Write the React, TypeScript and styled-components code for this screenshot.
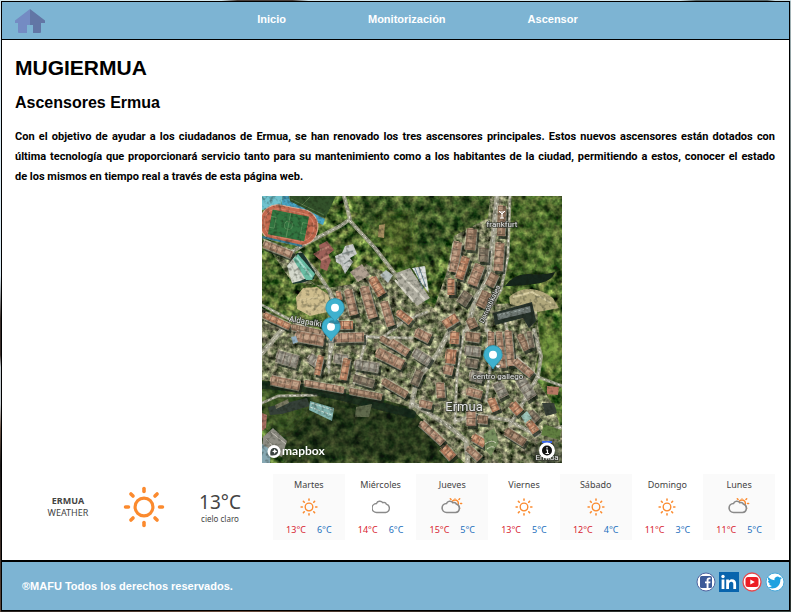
import React from 'react';
import styled, { createGlobalStyle } from 'styled-components';

const GlobalStyle = createGlobalStyle`
  * { box-sizing: border-box; }
  body {
    margin: 0;
    padding: 1px;
    font-family: 'Liberation Sans', Arial, sans-serif;
    font-size: 11px;
    color: #000;
    background:
      linear-gradient(to right, #d5e8ee 0 28%, #4b3f3a 30% 37%, #d3e6ed 39% 86%, #59676a 88% 97%, #c9dde4 98%) top / 100% 1px no-repeat,
      linear-gradient(#d9e9f2 0 45%, #3b302c 52% 58%, #c5ccd0 60% 66%, #6d5648 70%, #1a1818 76%, #5d4639) left / 1px 100% no-repeat,
      linear-gradient(to right, #2a2522, #6b4c3b 30%, #26231f 60%, #3d4a48) bottom / 100% 1px no-repeat,
      linear-gradient(#a9bbbf, #46504d 40%, #2c3532);
  }
`;

const Page = styled.div`
  display: flex;
  flex-direction: column;
  min-height: calc(100vh - 2px);
  border: 1px solid #000;
  background: #fff;
`;

const Header = styled.header`
  display: flex;
  align-items: center;
  height: 38px;
  padding-left: 12px;
  border-bottom: 1px solid #000;
  background: #7db4d3;
`;

const HomeLink = styled.a`
  display: block;
  height: 26px;
  svg { display: block; }
`;

const Nav = styled.nav`
  flex: 1;
  display: flex;
  justify-content: center;
  gap: 82px;
`;

const NavLink = styled.a`
  color: #fff;
  font-weight: bold;
  line-height: 14px;
  text-decoration: none;
  padding-bottom: 3px;
`;

const Main = styled.main`
  flex: 1;
  display: flex;
  flex-direction: column;
  padding: 16px 14px 20px 13px;
`;

const Title = styled.h1`
  margin: 0;
  font-size: 21px;
  line-height: 24px;
`;

const Subtitle = styled.h2`
  margin: 13px 0 14px;
  font-size: 16px;
  line-height: 20px;
`;

const Intro = styled.p`
  margin: 0 0 9px;
  font-family: Roboto, 'Liberation Sans', sans-serif;
  font-weight: bold;
  line-height: 20px;
  text-align: justify;
`;

const MapFrame = styled.figure`
  align-self: center;
  width: 300px;
  margin: 0 0 11px 33px;
  svg { display: block; width: 100%; }
`;

const Weather = styled.section`
  display: grid;
  grid-template-columns: 258px 1fr;
  font-family: 'Noto Sans', sans-serif;
  color: #444;
`;

const Current = styled.div`
  display: grid;
  grid-template-columns: repeat(3, 1fr);
  align-items: center;
  justify-items: center;
  padding: 0 15px;
  text-align: center;
`;

const Place = styled.div`
  font-size: 9px;
  line-height: 12px;
  strong { display: block; }
`;

const Temperature = styled.div`
  font-size: 19px;
  line-height: 22px;
`;

const Sky = styled.div`
  font-size: 8px;
  line-height: 11px;
`;

const Forecast = styled.ul`
  display: grid;
  grid-template-columns: repeat(7, 1fr);
  margin: 0;
  padding: 0;
  list-style: none;
`;

const Day = styled.li<{ $shaded: boolean }>`
  display: flex;
  flex-direction: column;
  align-items: center;
  height: 66px;
  padding-top: 4px;
  font-size: 9px;
  line-height: 14px;
  background: ${p => (p.$shaded ? '#fafafa' : '#fff')};
  svg { margin: 6px 0 7px; }
`;

const Range = styled.div`
  display: flex;
  gap: 11px;
`;

const Degree = styled.span<{ $kind: 'max' | 'min' }>`
  color: ${p => (p.$kind === 'max' ? '#d8232f' : '#1c6fbd')};
`;

const Footer = styled.footer`
  display: flex;
  justify-content: space-between;
  height: 50px;
  padding: 0 4px 0 20px;
  border-top: 2px solid #000;
  background: #7db4d3;
`;

const Copyright = styled.p`
  margin: 17px 0 0;
  color: #fff;
  font-weight: bold;
  line-height: 14px;
`;

const Social = styled.div`
  display: flex;
  gap: 3px;
  padding-top: 10px;
  a { display: block; height: 20px; }
  svg { display: block; }
`;

/* ---------- icons ---------- */

const HomeIcon = () => (
  <svg width="32" height="26" viewBox="0 0 32 26">
    <path d="M16 1 31 12.5V15h-4v9q0 1-1 1h-7v-8h-3z" fill="#6276a5" />
    <path d="M16 1 1 12.5V15h3v9q0 1 1 1h8v-8h3z" fill="#748bc3" />
  </svg>
);

const Rays = ({ cx, cy, from, to, width }: { cx: number; cy: number; from: number; to: number; width: number }) => (
  <g stroke="#fb8a2e" strokeWidth={width} strokeLinecap="round">
    {[0, 45, 90, 135, 180, 225, 270, 315].map(a => (
      <line key={a} x1={cx + from} y1={cy} x2={cx + to} y2={cy} transform={`rotate(${a} ${cx} ${cy})`} />
    ))}
  </g>
);

const SunIcon = ({ size }: { size: number }) => (
  <svg width={size} height={size} viewBox="0 0 40 40">
    <circle cx="20" cy="20" r="8.5" fill="none" stroke="#fb8a2e" strokeWidth="3" />
    <Rays cx={20} cy={20} from={14.8} to={17.6} width={3.4} />
  </svg>
);

const cloudPath = 'M4.7 15.5a4.5 4.5 0 0 1-.2-9C5.4 4 8.9 3.3 10.9 5.7c1.5-.6 3 .1 3.4 1.4a4.3 4.3 0 0 1-.8 8.4z';

const CloudIcon = () => (
  <svg width="18" height="18" viewBox="0 0 18 18">
    <path d={cloudPath} fill="none" stroke="#8a8a8a" strokeWidth="1.4" transform="translate(0 -1)" />
  </svg>
);

const PartlyIcon = () => (
  <svg width="22" height="18" viewBox="0 0 22 18">
    <g transform="translate(1 -1)">
      <circle cx="13" cy="6.5" r="3.4" fill="none" stroke="#fb8a2e" strokeWidth="1.5" />
      <Rays cx={13} cy={6.5} from={5.6} to={6.6} width={1.5} />
      <path d={cloudPath} fill="#fafafa" stroke="#8a8a8a" strokeWidth="1.6" />
    </g>
  </svg>
);

const FacebookIcon = () => (
  <svg width="20" height="20" viewBox="0 0 20 20">
    <circle cx="10" cy="10" r="9" fill="#fff" stroke="#5065a0" strokeWidth="1" />
    <rect x="4" y="4" width="12" height="12" rx="1.5" fill="#3c5a99" />
    <path d="M10.6 16v-4.7H9V9.4h1.6V8c0-1.7 1-2.6 2.5-2.6h1.4v1.8h-1c-.8 0-1 .4-1 1v1.2h2l-.3 1.9h-1.7V16z" fill="#fff" />
  </svg>
);

const LinkedInIcon = () => (
  <svg width="20" height="20" viewBox="0 0 20 20">
    <rect width="20" height="20" fill="#0864ad" />
    <circle cx="4" cy="4.5" r="1.7" fill="#fff" />
    <path d="M2.6 7.5h2.8V17H2.6zM7.2 7.5h2.7v1.3c.6-1 1.6-1.6 3-1.6 2.8 0 4.2 1.6 4.2 4.5V17h-2.8v-4.9c0-1.4-.7-2.3-2-2.3-1.4 0-2.3 1-2.3 2.5V17H7.2z" fill="#fff" />
  </svg>
);

const YouTubeIcon = () => (
  <svg width="20" height="20" viewBox="0 0 20 20">
    <circle cx="10" cy="10" r="9" fill="#fff" stroke="#e6494e" strokeWidth="1.3" />
    <rect x="3.5" y="5" width="13" height="10" rx="2.5" fill="#ec1c24" />
    <path d="M8.3 7.6 12.8 10 8.3 12.4z" fill="#fff" />
  </svg>
);

const TwitterIcon = () => (
  <svg width="20" height="20" viewBox="0 0 20 20">
    <circle cx="10" cy="10" r="9" fill="#fff" stroke="#49a9da" strokeWidth="1" />
    <path d="M17 5.8c-.6.2-1.1.4-1.7.4.6-.3 1-.9 1.2-1.5-.6.3-1.2.6-1.9.7a3.1 3.1 0 0 0-5.2 2.8C6.9 8 4.8 6.9 3.4 5.1c-.9 1.5-.3 3.1.9 4-.5 0-.9-.1-1.3-.4 0 1.5 1 2.7 2.4 3-.4.1-.9.1-1.3 0 .4 1.3 1.5 2.1 2.9 2.2-1.3 1-2.9 1.4-4.5 1.2 5.5 3.2 13 .4 12.9-7.7.6-.4 1.2-1 1.6-1.6z" fill="#1da1e0" />
  </svg>
);

/* ---------- map ---------- */

// x1, y1, x2, y2, roof width, roof colour index
type Row = [number, number, number, number, number, number];

const ROOFS: [string, string][] = [
  ['#a47f68', '#c6a58b'],
  ['#8d705a', '#b4957b'],
  ['#8b877b', '#aeaa9c'],
  ['#b27a5c', '#d8a583'],
  ['#716859', '#988a75'],
];

const ROWS: Row[] = [
  [2, 48, 30, 59, 7, 0], [2, 119, 28, 131, 6, 3], [30, 131, 62, 138, 6, 1],
  [86, 94, 92, 119, 8, 0], [102, 91, 111, 122, 9, 0], [110, 82, 120, 99, 9, 3],
  [122, 106, 129, 130, 8, 0], [76, 96, 78, 104, 5, 3], [136, 116, 149, 126, 7, 3],
  [74, 129, 91, 129, 8, 3], [34, 140, 62, 145, 10, 0], [72, 142, 102, 141, 9, 0],
  [15, 160, 36, 166, 12, 2], [47, 161, 60, 170, 9, 2], [59, 160, 55, 179, 6, 3],
  [72, 162, 86, 164, 9, 2], [85, 163, 81, 184, 7, 3], [93, 168, 117, 172, 9, 2], [92, 182, 112, 188, 8, 4],
  [115, 156, 141, 169, 10, 0], [119, 142, 134, 151, 6, 1], [129, 146, 146, 157, 8, 0],
  [121, 185, 145, 199, 7, 1], [9, 184, 38, 190, 9, 0], [43, 187, 82, 194, 6, 0], [88, 195, 120, 201, 6, 1],
  [196, 46, 191, 76, 8, 0], [189, 83, 189, 99, 7, 3], [210, 33, 208, 54, 10, 1], [204, 61, 197, 83, 8, 3],
  [222, 52, 221, 66, 9, 4], [218, 69, 210, 89, 10, 0], [206, 97, 199, 108, 10, 4],
  [240, 10, 239, 40, 8, 1], [238, 47, 236, 75, 9, 0], [233, 78, 227, 90, 9, 1], [225, 96, 218, 111, 10, 1],
  [182, 129, 195, 121, 9, 3], [208, 123, 212, 132, 9, 1],
  [154, 136, 168, 143, 9, 0], [152, 156, 168, 166, 9, 2], [158, 175, 152, 189, 8, 4],
  [184, 160, 194, 161, 14, 3], [182, 173, 191, 175, 9, 0], [178, 187, 179, 202, 8, 0],
  [193, 136, 192, 148, 9, 3], [204, 140, 218, 142, 9, 1], [203, 154, 219, 156, 9, 2],
  [204, 166, 216, 168, 8, 4], [208, 179, 221, 182, 10, 2], [205, 195, 220, 199, 8, 0],
  [229, 136, 229, 153, 6, 0], [237, 136, 241, 172, 6, 0], [246, 135, 249, 170, 7, 0],
  [258, 139, 265, 154, 7, 1], [267, 136, 270, 152, 5, 4], [253, 165, 270, 179, 7, 0],
  [258, 183, 270, 202, 10, 2], [235, 187, 242, 201, 9, 2], [229, 203, 234, 215, 8, 3],
  [250, 208, 258, 217, 9, 3], [267, 226, 274, 236, 8, 3], [244, 235, 263, 247, 8, 1],
  [209, 215, 209, 230, 9, 0], [216, 223, 226, 224, 8, 1], [211, 241, 223, 248, 8, 3],
  [206, 252, 218, 263, 7, 0], [181, 251, 191, 262, 9, 3], [159, 227, 181, 247, 7, 0],
  [158, 207, 170, 210, 7, 0], [268, 216, 276, 224, 7, 4],
];

const ROADS: [string, number][] = [
  ['M0 109C25 122 40 131 68 140L150 142', 3],
  ['M31 55 45 47 80 29 88 23 82 0', 4],
  ['M88 25 113 52 133 78 150 98', 4],
  ['M38 57 57 79 68 96 76 118 66 170', 4],
  ['M0 157 25 128', 5],
  ['M68 137 67 176', 3],
  ['M105 140 92 187', 3],
  ['M94 139 120 142 142 125 165 116', 3],
  ['M235 0 231 42 226 82 214 101 205 134', 5],
  ['M248 0 246 60 239 94 224 118 224 135', 3],
  ['M188 134 176 157 155 184 149 211', 5],
  ['M150 207 187 230 204 245 206 267', 5],
  ['M202 134 195 178 193 227', 3],
  ['M226 134 228 174 224 205', 3],
  ['M193 225 214 219 246 224 274 239 300 231', 4],
  ['M272 134 279 160 276 180 257 214 248 229', 4],
  ['M243 126 252 159 276 181 300 190', 3],
  ['M0 207 16 200 54 199', 3],
];

const Pin = ({ x, y }: { x: number; y: number }) => (
  <g transform={`translate(${x} ${y})`}>
    <ellipse cx="0" cy="14" rx="6" ry="2" fill="#0a2333" opacity="0.3" />
    <path d="M0 14C-2.5 9-9.2 5.5-9.2-.3a9.2 9.2 0 0 1 18.4 0C9.2 5.5 2.5 9 0 14z" fill="#3fb1ce" />
    <path d="M0 14C-2.5 9-9.2 5.5-9.2-.3a9.2 9.2 0 0 1 18.4 0C9.2 5.5 2.5 9 0 14z" fill="none" stroke="#2b94af" strokeWidth="0.8" />
    <circle cx="0" cy="-.3" r="4" fill="#fff" />
  </g>
);

const SatelliteMap = () => (
  <svg viewBox="0 0 300 267" role="img" aria-label="Mapa de los ascensores de Ermua">
    <defs>
      <filter id="forest" x="0" y="0" width="100%" height="100%" colorInterpolationFilters="sRGB">
        <feTurbulence type="fractalNoise" baseFrequency="0.12" numOctaves="3" seed="7" />
        <feColorMatrix values="1.2 0.3 0 0 -0.44  1.1 0.5 0 0 -0.38  0.7 0.2 0 0 -0.27  0 0 0 0 1" />
      </filter>
      <filter id="ground" x="0" y="0" width="100%" height="100%" colorInterpolationFilters="sRGB">
        <feTurbulence type="fractalNoise" baseFrequency="0.17" numOctaves="3" seed="3" result="n" />
        <feColorMatrix in="n" values="1.2 0.4 0 0 -0.32  1.1 0.5 0 0 -0.3  1 0.3 0 0 -0.28  0 0 0 0 1" />
        <feComposite in2="SourceGraphic" operator="in" />
      </filter>
      <filter id="grain" x="0" y="0" width="100%" height="100%" colorInterpolationFilters="sRGB">
        <feTurbulence type="fractalNoise" baseFrequency="0.25" numOctaves="2" seed="12" />
        <feColorMatrix values="0 0 0 0 0.07  0 0 0 0 0.09  0 0 0 0 0.05  2.8 0 0 0 -1.3" />
      </filter>
      <filter id="soft"><feGaussianBlur stdDeviation="0.5" /></filter>
      <filter id="shade"><feGaussianBlur stdDeviation="4" /></filter>
      <clipPath id="mapEdge"><rect width="300" height="267" /></clipPath>
    </defs>
    <g clipPath="url(#mapEdge)">
      <rect width="300" height="267" filter="url(#forest)" />
      <g filter="url(#shade)">
        <path d="M0 188 145 204 176 235 202 267H22L0 215z" fill="#0c1c12" opacity="0.6" />
        <path d="M0 196 30 195 45 215 22 238 0 222z" fill="#607a33" opacity="0.4" />
        <path d="M90 0H232L222 30 190 38 170 72 135 60 102 25z" fill="#213816" opacity="0.3" />
        <path d="M250 0H300V80H250z" fill="#4c7430" opacity="0.3" />
        <path d="M276 134H300V170L278 168z" fill="#7ea042" opacity="0.7" />
        <path d="M115 20H150V70H128z" fill="#67762c" opacity="0.3" />
      </g>
      <path
        d="M0 42 32 54 45 82 60 93 90 88 104 68 132 80 152 99 172 112 184 78 192 40 226 22 228 0H248L245 70 234 108 274 106 278 148 272 180 292 210 300 236V267H202L176 240 148 211 115 202 0 184V112L32 130 66 135V90L30 86z"
        filter="url(#ground)"
      />
      <g filter="url(#soft)">
        <g fill="none" strokeLinecap="round" strokeLinejoin="round">
          {ROADS.map(([d, w]) => <path key={d} d={d} stroke="#b1af9e" strokeWidth={w} opacity="0.85" />)}
          {ROADS.map(([d]) => <path key={d} d={d} stroke="#e5e4d9" strokeWidth="1" strokeDasharray="2 5 1 3" />)}
          <path d="M0 177 40 180 85 190 150 206" stroke="#14221b" strokeWidth="8" transform="translate(0 12)" opacity="0.7" />
        </g>
        {ROWS.map(([x1, y1, x2, y2, w, c]) => {
          const line = { x1, y1, x2, y2 };
          return (
            <g key={`${x1}-${y1}`}>
              <line {...line} stroke="#17221b" strokeWidth={w + 1} transform="translate(2 3)" opacity="0.7" />
              <line {...line} stroke="#d6cdb9" strokeWidth={w + 2} opacity="0.55" />
              <line {...line} stroke={ROOFS[c][0]} strokeWidth={w} />
              <line {...line} stroke={ROOFS[c][1]} strokeWidth={w / 2} strokeDasharray="5 2 7 1" transform="translate(-1 -1)" />
              <line {...line} stroke="#5d4a3d" strokeWidth={w} strokeDasharray="1 6" opacity="0.5" />
            </g>
          );
        })}

        {/* sports grounds */}
        <path d="M0 0H21L19 9 0 14z" fill="#6fc3cf" />
        <path d="M21 0 27 0 28 5 63 23 61 29 19 10z" fill="#4aa4c4" />
        <path d="M28 0H74L63 22 28 5z" fill="#31512b" />
        <path d="M29 3 62 19M48 1 40 9" stroke="#6e8c57" strokeWidth="0.6" />
        <g transform="rotate(11 27 29)">
          <rect x="-2" y="11" width="58" height="36" rx="17" fill="#c66a50" stroke="#e0b49f" strokeWidth="1" />
          <rect x="2" y="15" width="50" height="28" rx="13" fill="none" stroke="#dc9177" strokeWidth="0.7" />
          <rect x="8" y="17" width="37" height="25" fill="#31743f" />
          <path d="M26.5 17V42M8 24h5v11H8M45 24h-5v11h5" fill="none" stroke="#70a16c" strokeWidth="0.6" />
          <circle cx="26.5" cy="29.5" r="4" fill="none" stroke="#70a16c" strokeWidth="0.6" />
        </g>
        <path d="M0 41 40 50" stroke="#397f96" strokeWidth="2" />

        {/* pavilion, dirt lot and school buildings */}
        <path d="M26 69 35 57 41 57 53 76 52 83 39 87 31 88z" fill="#1f3830" />
        <path d="M25 70 34 59 51 79 38 85 30 87z" fill="#d5d9cd" />
        <path d="M31 63 36 58 53 78 50 84 44 84z" fill="#6bbda4" />
        <path d="M34 61 50 81" stroke="#a8ded0" strokeWidth="2" />
        <path d="M34 101 41 92 55 91 66 98 70 115 48 120 35 113z" fill="#cfbe8e" />
        <path d="M37 104 60 101M44 113 66 108" stroke="#ddcda0" strokeWidth="2" opacity="0.6" />
        <path d="M51 58 58 54 57 49 65 45 72 54 66 59 69 64 65 75 58 72 59 65z" fill="#9d6158" />
        <path d="M58 54 67 51M59 64 67 60" stroke="#c18475" strokeWidth="2" />
        <path d="M73 60 80 57 83 50 91 48 95 58 88 62 91 66 83 78 79 69 74 66z" fill="#c9ccca" />
        <path d="M80 58 91 55M82 68 88 64" stroke="#8d9794" strokeWidth="1.5" />
        <path d="M88 76 100 68 108 79 96 86z" fill="#b1a192" />
        <path d="M118 79 124 74 131 79 126 87z" fill="#b8c1c0" />
        <path d="M117 29 123 28 122 42 116 41z" fill="#a58e60" />
        <path d="M134 77 148 72 168 102 155 110 136 86z" fill="#b0aea1" />
        <path d="M150 72 163 70 167 97 160 88z" fill="#dfe3e1" />
        <path d="M153 72l8 21M157 71l7 20" stroke="#708e9d" strokeWidth="1" />
        <path d="M133 84 152 106M139 78 163 104" stroke="#d9d7c9" strokeWidth="2" />

        {/* hillside clearing and long slate roof */}
        <path d="M243 90Q252 77 268 78T293 76Q290 86 272 88T243 90z" fill="#17271a" />
        <path d="M247 101Q257 92 269 93T291 102L297 112 276 116 248 108z" fill="#b1a87b" />
        <path d="M251 101 270 96 289 107" fill="none" stroke="#dad0a5" strokeWidth="2" />
        <path d="M231 117 270 106 274 125 267 132 261 122 233 129z" fill="#27302c" />
        <path d="M235 118 268 110 269 116 236 124z" fill="#737d79" />
        <path d="M237 119 268 112" stroke="#a6b2ae" strokeDasharray="2 2" />

        {/* industrial roofs */}
        <path d="M6 211 45 202 48 210 20 218 8 219z" fill="#344038" />
        <path d="M13 209 26 203 27 207 14 213z" fill="#7a7962" />
        <path d="M48 205 72 212 70 225 47 214z" fill="#84b6b1" />
        <path d="M49 207 71 214M48 211 70 219" stroke="#d2e3db" strokeDasharray="3 1" />
        <path d="M94 211 110 208 107 221 93 221z" fill="#606a4e" />
        <path d="M0 217 5 219 4 232 0 235z" fill="#ab7165" />
        <path d="M1 241 11 232 25 245 20 261 0 252z" fill="#8f8e84" />
        <path d="M4 243 18 258M9 236 24 248" stroke="#c6c2b8" />
        <path d="M0 248 9 254 8 267H0z" fill="#87a8b3" />
        <path d="M29 141 34 140 36 146 31 148z" fill="#91adbf" />
        <path d="M259 220 265 215 270 222 263 227z" fill="#9fc6bb" />
        <path d="M285 190 297 191 296 199 285 198z" fill="#b67864" />
        <path d="M280 207 292 207 295 217 284 220z" fill="#384039" />
        <path d="M282 228 299 234 298 244 279 239z" fill="#607e3f" />
        <path d="M222 238 232 232 237 246 229 260 223 253z" fill="#78905e" />
        <path d="M223 248q7-5 11-1M225 253q5-4 8-1" fill="none" stroke="#d3d7bd" />
      </g>
      <rect width="300" height="267" filter="url(#grain)" opacity="0.4" />
      <ellipse cx="285" cy="258" rx="18" ry="10" fill="#18211c" opacity="0.5" filter="url(#shade)" />

      <g
        fontFamily="Roboto, sans-serif" fontSize="8" fill="#e8e8e8" textAnchor="middle"
        stroke="#30332d" strokeWidth="1.6" strokeOpacity="0.8" paintOrder="stroke"
      >
        <text x="240" y="31">frankfurt</text>
        <text x="236" y="183">centro gallego</text>
        <text transform="translate(43 128) rotate(10)">Aldapalki</text>
        <text transform="translate(230 109) rotate(-65)" fontSize="7">Donostikalea</text>
        <text x="202" y="215" fontSize="13">Ermua</text>
        <text x="285" y="264" fontSize="8">Ermua</text>
      </g>
      <path d="M237 15l3 3 3-3M238 16h4M240 18v4M238 22h4" fill="none" stroke="#fff" strokeWidth="1" />
      <path d="M233 169h6l-2 3h-2zM234 174h4" fill="#fff" stroke="#333" strokeWidth="0.5" />
      <Pin x={69} y={131} />
      <Pin x={73} y={112} />
      <Pin x={231} y={159} />

      <circle cx="12" cy="255.5" r="6.5" fill="#fff" />
      <path d="M8.5 259.5c-1-6 1.5-8 4.5-7.5 4 .8 4 5.5 1 6.8-1.5.8-3.5.7-5.5.7z" fill="#3b4340" />
      <path d="M12.7 252.8l.8 1.8 1.9.8-1.9.8-.8 1.8-.8-1.8-1.9-.8 1.9-.8z" fill="#fff" />
      <text x="20" y="259" fontFamily="Lato, sans-serif" fontWeight="bold" fontSize="12" fill="#fff">mapbox</text>
      <path d="M280 246h10" stroke="#3b66e6" strokeWidth="2" />
      <circle cx="285" cy="254.5" r="8" fill="#fff" />
      <circle cx="285" cy="254.5" r="5" fill="#111" />
      <path d="M284 254h1.5v3.5M283.5 257.5h3.5M285 251v1.5" fill="none" stroke="#fff" strokeWidth="1.2" />
    </g>
  </svg>
);

/* ---------- content ---------- */

type Kind = 'sun' | 'cloud' | 'partly';

const WEEK: { day: string; kind: Kind; max: number; min: number }[] = [
  { day: 'Martes', kind: 'sun', max: 13, min: 6 },
  { day: 'Miércoles', kind: 'cloud', max: 14, min: 6 },
  { day: 'Jueves', kind: 'partly', max: 15, min: 5 },
  { day: 'Viernes', kind: 'sun', max: 13, min: 5 },
  { day: 'Sábado', kind: 'sun', max: 12, min: 4 },
  { day: 'Domingo', kind: 'sun', max: 11, min: 3 },
  { day: 'Lunes', kind: 'partly', max: 11, min: 5 },
];

const WeatherIcon = ({ kind }: { kind: Kind }) => {
  if (kind === 'sun') return <SunIcon size={18} />;
  return kind === 'cloud' ? <CloudIcon /> : <PartlyIcon />;
};

export default function App() {
  return (
    <>
      <GlobalStyle />
      <Page>
        <Header>
          <HomeLink href="#" aria-label="Inicio"><HomeIcon /></HomeLink>
          <Nav>
            <NavLink href="#inicio">Inicio</NavLink>
            <NavLink href="#monitorizacion">Monitorización</NavLink>
            <NavLink href="#ascensor">Ascensor</NavLink>
          </Nav>
        </Header>
        <Main>
          <Title>MUGIERMUA</Title>
          <Subtitle>Ascensores Ermua</Subtitle>
          <Intro>
            Con el objetivo de ayudar a los ciudadanos de Ermua, se han renovado los tres ascensores principales. Estos
            nuevos ascensores están dotados con última tecnología que proporcionará servicio tanto para su mantenimiento
            como a los habitantes de la ciudad, permitiendo a estos, conocer el estado de&nbsp;los mismos en tiempo real a
            través de esta página web.
          </Intro>
          <MapFrame><SatelliteMap /></MapFrame>
          <Weather>
            <Current>
              <Place><strong>ERMUA</strong>WEATHER</Place>
              <SunIcon size={42} />
              <div>
                <Temperature>13°C</Temperature>
                <Sky>cielo claro</Sky>
              </div>
            </Current>
            <Forecast>
              {WEEK.map(({ day, kind, max, min }, i) => (
                <Day key={day} $shaded={i % 2 === 0}>
                  {day}
                  <WeatherIcon kind={kind} />
                  <Range>
                    <Degree $kind="max">{max}°C</Degree>
                    <Degree $kind="min">{min}°C</Degree>
                  </Range>
                </Day>
              ))}
            </Forecast>
          </Weather>
        </Main>
        <Footer>
          <Copyright>®MAFU Todos los derechos reservados.</Copyright>
          <Social>
            <a href="#facebook" aria-label="Facebook"><FacebookIcon /></a>
            <a href="#linkedin" aria-label="LinkedIn"><LinkedInIcon /></a>
            <a href="#youtube" aria-label="YouTube"><YouTubeIcon /></a>
            <a href="#twitter" aria-label="Twitter"><TwitterIcon /></a>
          </Social>
        </Footer>
      </Page>
    </>
  );
}
